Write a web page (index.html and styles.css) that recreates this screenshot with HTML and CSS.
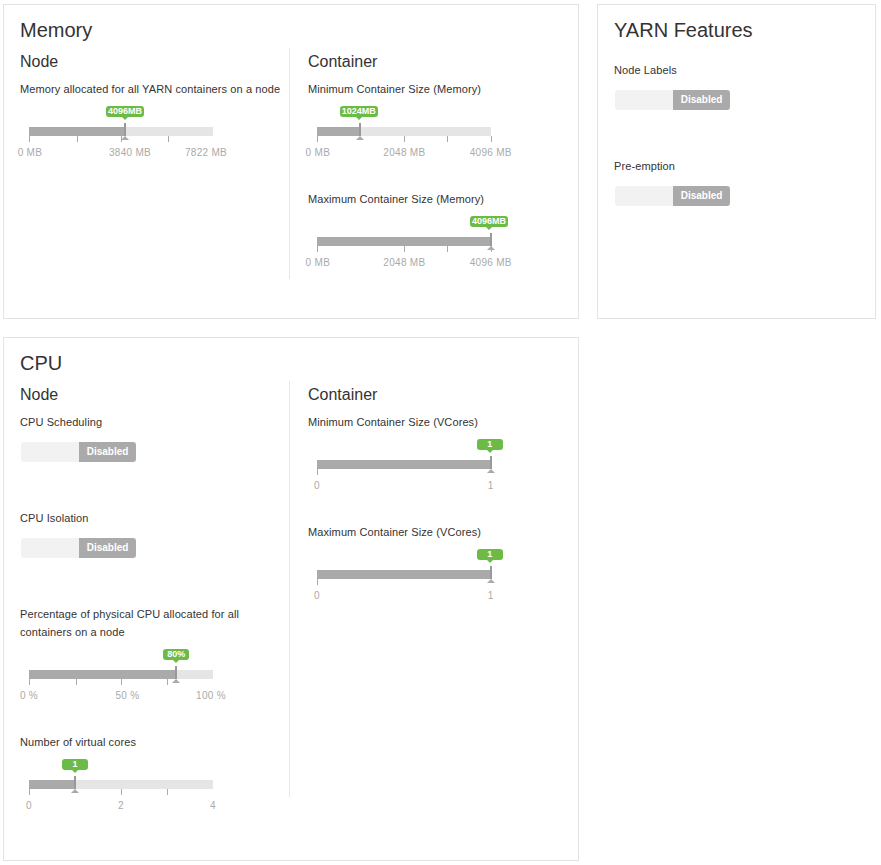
FILE: index.html
```html
<!DOCTYPE html>
<html lang="en">

<head>
    <meta charset="UTF-8">
    <meta name="viewport" content="width=device-width, initial-scale=1.0">
    <title>YARN Settings</title>
    <link rel="stylesheet" href="styles.css">
</head>

<body>
    <div class="page">

        <!-- Memory -->
        <div class="panel panel-memory">
            <h2>Memory</h2>
            <div class="panel-row row-memory">
                <div class="col col-node">
                    <h3>Node</h3>
                    <div class="field">
                        <div class="field-label">Memory allocated for all YARN containers on a node</div>
                        <div class="slider">
                            <div class="slider-track"></div>
                            <div class="slider-fill" style="width: 52.2%"></div>
                            <span class="tick" style="left: 0%"></span>
                            <span class="tick" style="left: 26%"></span>
                            <span class="tick" style="left: 50%"></span>
                            <span class="tick" style="left: 75.5%"></span>
                            <span class="tick-label" style="left: 0.5%">0 MB</span>
                            <span class="tick-label" style="left: 54.9%">3840 MB</span>
                            <span class="tick-label" style="left: 96.2%">7822 MB</span>
                            <span class="handle" style="left: 52.2%"></span>
                            <span class="slider-tip" style="left: 52.2%">4096MB</span>
                        </div>
                    </div>
                </div>
                <div class="col col-container">
                    <h3>Container</h3>
                    <div class="field">
                        <div class="field-label">Minimum Container Size (Memory)</div>
                        <div class="slider">
                            <div class="slider-track"></div>
                            <div class="slider-fill" style="width: 25%"></div>
                            <span class="tick" style="left: 0%"></span>
                            <span class="tick" style="left: 50.3%"></span>
                            <span class="tick" style="left: 75%"></span>
                            <span class="tick" style="left: 100%"></span>
                            <span class="tick-label" style="left: 0.5%">0 MB</span>
                            <span class="tick-label" style="left: 50.3%">2048 MB</span>
                            <span class="tick-label" style="left: 100%">4096 MB</span>
                            <span class="handle" style="left: 25%"></span>
                            <span class="slider-tip" style="left: 24%">1024MB</span>
                        </div>
                    </div>
                    <div class="field">
                        <div class="field-label">Maximum Container Size (Memory)</div>
                        <div class="slider">
                            <div class="slider-track"></div>
                            <div class="slider-fill" style="width: 100%"></div>
                            <span class="tick" style="left: 0%"></span>
                            <span class="tick" style="left: 50.3%"></span>
                            <span class="tick" style="left: 75%"></span>
                            <span class="tick" style="left: 100%"></span>
                            <span class="tick-label" style="left: 0.5%">0 MB</span>
                            <span class="tick-label" style="left: 50.3%">2048 MB</span>
                            <span class="tick-label" style="left: 100%">4096 MB</span>
                            <span class="handle" style="left: 100%"></span>
                            <span class="slider-tip" style="left: 99%">4096MB</span>
                        </div>
                    </div>
                </div>
            </div>
        </div>

        <!-- YARN Features -->
        <div class="panel panel-features">
            <h2>YARN Features</h2>
            <div class="features">
                <div class="field">
                    <div class="field-label">Node Labels</div>
                    <div class="toggle">
                        <span class="toggle-off"></span>
                        <span class="toggle-on">Disabled</span>
                    </div>
                </div>
                <div class="field">
                    <div class="field-label">Pre-emption</div>
                    <div class="toggle">
                        <span class="toggle-off"></span>
                        <span class="toggle-on">Disabled</span>
                    </div>
                </div>
            </div>
        </div>

        <!-- CPU -->
        <div class="panel panel-cpu">
            <h2>CPU</h2>
            <div class="panel-row">
                <div class="col col-node">
                    <h3>Node</h3>
                    <div class="field">
                        <div class="field-label">CPU Scheduling</div>
                        <div class="toggle">
                            <span class="toggle-off"></span>
                            <span class="toggle-on">Disabled</span>
                        </div>
                    </div>
                    <div class="field">
                        <div class="field-label">CPU Isolation</div>
                        <div class="toggle">
                            <span class="toggle-off"></span>
                            <span class="toggle-on">Disabled</span>
                        </div>
                    </div>
                    <div class="field">
                        <div class="field-label">Percentage of physical CPU allocated for all containers on a node</div>
                        <div class="slider">
                            <div class="slider-track"></div>
                            <div class="slider-fill" style="width: 80%"></div>
                            <span class="tick" style="left: 0%"></span>
                            <span class="tick" style="left: 25.4%"></span>
                            <span class="tick" style="left: 50%"></span>
                            <span class="tick" style="left: 75%"></span>
                            <span class="tick-label" style="left: 0%">0 %</span>
                            <span class="tick-label" style="left: 53.5%">50 %</span>
                            <span class="tick-label" style="left: 98.9%">100 %</span>
                            <span class="handle" style="left: 80%"></span>
                            <span class="slider-tip" style="left: 80%">80%</span>
                        </div>
                    </div>
                    <div class="field">
                        <div class="field-label">Number of virtual cores</div>
                        <div class="slider">
                            <div class="slider-track"></div>
                            <div class="slider-fill" style="width: 25%"></div>
                            <span class="tick" style="left: 0%"></span>
                            <span class="tick" style="left: 50%"></span>
                            <span class="tick" style="left: 75%"></span>
                            <span class="tick-label" style="left: 0%">0</span>
                            <span class="tick-label" style="left: 50%">2</span>
                            <span class="tick-label" style="left: 100%">4</span>
                            <span class="handle" style="left: 25%"></span>
                            <span class="slider-tip" style="left: 25%">1</span>
                        </div>
                    </div>
                </div>
                <div class="col col-container">
                    <h3>Container</h3>
                    <div class="field">
                        <div class="field-label">Minimum Container Size (VCores)</div>
                        <div class="slider">
                            <div class="slider-track"></div>
                            <div class="slider-fill" style="width: 100%"></div>
                            <span class="tick" style="left: 0%"></span>
                            <span class="tick-label" style="left: 0%">0</span>
                            <span class="tick-label" style="left: 100%">1</span>
                            <span class="handle" style="left: 100%"></span>
                            <span class="slider-tip" style="left: 99.5%">1</span>
                        </div>
                    </div>
                    <div class="field">
                        <div class="field-label">Maximum Container Size (VCores)</div>
                        <div class="slider">
                            <div class="slider-track"></div>
                            <div class="slider-fill" style="width: 100%"></div>
                            <span class="tick" style="left: 0%"></span>
                            <span class="tick-label" style="left: 0%">0</span>
                            <span class="tick-label" style="left: 100%">1</span>
                            <span class="handle" style="left: 100%"></span>
                            <span class="slider-tip" style="left: 99.5%">1</span>
                        </div>
                    </div>
                </div>
            </div>
        </div>

    </div>
</body>

</html>
```

FILE: styles.css
```css
/* General Reset */
* {
    margin: 0;
    padding: 0;
    box-sizing: border-box;
}

body {
    font-family: 'Liberation Sans', Arial, sans-serif;
    color: #333;
    background: #fff;
}

/* Page grid */
.page {
    display: grid;
    grid-template-columns: 576px 279px;
    column-gap: 18px;
    row-gap: 18px;
    padding: 4px 0 0 3px;
    align-items: start;
}

/* Panels */
.panel {
    border: 1px solid #e3e3e3;
    padding: 14px 16px 39px 16px;
}

.panel-features {
    align-self: stretch;
}

.panel-cpu {
    padding-bottom: 63px;
}

h2 {
    font-size: 20px;
    line-height: 22px;
    font-weight: normal;
    margin-bottom: 7px;
}

h3 {
    font-size: 16px;
    line-height: 18px;
    font-weight: normal;
    margin-bottom: 9px;
}

/* Two columns inside a panel */
.panel-row {
    display: flex;
}

.col {
    padding-top: 5px;
}

.row-memory .col {
    padding-bottom: 25px;
}

.col-node {
    flex: 0 0 270px;
    border-right: 1px solid #e6e6e6;
}

.col-container {
    flex: 1;
    padding-left: 18px;
}

/* Fields */
.field {
    margin-bottom: 47px;
}

.field:last-child {
    margin-bottom: 0;
}

.field-label {
    font-size: 11px;
    line-height: 18px;
    letter-spacing: 0.1px;
}

.features {
    padding-top: 13px;
}

/* Toggle switch */
.toggle {
    display: flex;
    width: 115px;
    height: 20px;
    margin: 11px 0 0 1px;
    border-radius: 3px;
    overflow: hidden;
}

.toggle-off {
    flex: 0 0 58px;
    background: #f2f2f2;
}

.toggle-on {
    flex: 1;
    background: #aaa;
    color: #fff;
    font-size: 10px;
    font-weight: bold;
    line-height: 20px;
    text-align: center;
}

/* Slider */
.slider {
    position: relative;
    width: 68.4%;
    height: 45px;
    margin: 0 0 1px 9px;
}

.slider-track,
.slider-fill {
    position: absolute;
    top: 29px;
    left: 0;
    height: 9px;
}

.slider-track {
    right: 0;
    background: #e5e5e5;
}

.slider-fill {
    background: #aaa;
}

.tick {
    position: absolute;
    top: 38px;
    width: 1px;
    height: 6px;
    background: #aaa;
}

.tick-label {
    position: absolute;
    top: 49px;
    font-size: 10px;
    line-height: 12px;
    letter-spacing: 0.3px;
    color: #aaa;
    white-space: nowrap;
    transform: translateX(-50%);
}

.handle {
    position: absolute;
    top: 25px;
    width: 2px;
    height: 13px;
    margin-left: -1px;
    background: #999;
}

.handle::after {
    content: "";
    position: absolute;
    top: 13px;
    left: -3px;
    border-left: 4px solid transparent;
    border-right: 4px solid transparent;
    border-bottom: 4px solid #aaa;
}

.slider-tip {
    position: absolute;
    top: 8px;
    min-width: 26px;
    height: 11px;
    padding: 0 2px;
    border-radius: 3px;
    background: #6cbb46;
    color: #fff;
    font-size: 9px;
    font-weight: bold;
    line-height: 11px;
    text-align: center;
    white-space: nowrap;
    transform: translateX(-50%);
}

.slider-tip::after {
    content: "";
    position: absolute;
    left: 50%;
    bottom: -3px;
    margin-left: -3px;
    border-left: 3px solid transparent;
    border-right: 3px solid transparent;
    border-top: 3px solid #6cbb46;
}
```
